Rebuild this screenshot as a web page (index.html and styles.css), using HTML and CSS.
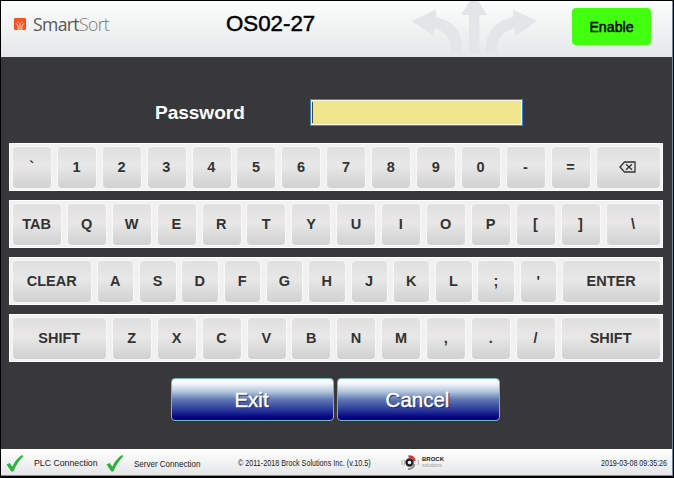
FILE: index.html
```
<!DOCTYPE html>
<html lang="en">
<head>
<meta charset="utf-8">
<title>SmartSort OS02-27</title>
<link rel="stylesheet" href="styles.css">
</head>
<body>
<div class="window">
  <header class="header">
    <svg class="mark" viewBox="0 0 12 12"><rect width="12" height="12" rx="1" fill="#f9511f"/><path d="M6 12V4.500M4.200 12V9Q4.200 6.500 1.800 5.500M7.800 12V9Q7.800 6.500 10.200 5.500" stroke="#ffd5c6" stroke-width="1" fill="none"/><path d="M4 3.500V5M8 3.500V5" stroke="#ffd5c6" stroke-width=".8"/></svg>
    <div class="brand">Smart<span>Sort</span></div>
    <h1 class="title">OS02-27</h1>
    <svg class="arrows" viewBox="0 0 126 56"><g fill="#e3e5e7"><path d="M62 -7L75 14H67.500V53H57V14H49Z"/><path d="M0 20L24 8.500V16Q49 22 50 45V53H39V45Q38 32 22 27V35Z"/><path d="M125 20L101 8.500V16Q75 22 74 45V53H85V45Q86 32 103 27V35Z"/></g></svg>
    <button class="enable">Enable</button>
  </header>
  <main class="main">
    <div class="field"><label for="pw">Password</label><div id="pw" class="input"><i></i></div></div>
    <div class="keyboard">
      <div class="row r1"><b>`</b><b>1</b><b>2</b><b>3</b><b>4</b><b>5</b><b>6</b><b>7</b><b>8</b><b>9</b><b>0</b><b>-</b><b>=</b><b><svg class="back" viewBox="0 0 17 12"><path d="M1 6L5.500 1H16V11H5.500ZM7 3.200L13 8.800M13 3.200L7 8.800" fill="none" stroke="#333" stroke-width="1.300"/></svg></b></div>
      <div class="row r2"><b>TAB</b><b>Q</b><b>W</b><b>E</b><b>R</b><b>T</b><b>Y</b><b>U</b><b>I</b><b>O</b><b>P</b><b>[</b><b>]</b><b>\</b></div>
      <div class="row r3"><b>CLEAR</b><b>A</b><b>S</b><b>D</b><b>F</b><b>G</b><b>H</b><b>J</b><b>K</b><b>L</b><b>;</b><b>'</b><b>ENTER</b></div>
      <div class="row r4"><b>SHIFT</b><b>Z</b><b>X</b><b>C</b><b>V</b><b>B</b><b>N</b><b>M</b><b>,</b><b>.</b><b>/</b><b>SHIFT</b></div>
    </div>
    <div class="actions"><button>Exit</button><button>Cancel</button></div>
  </main>
  <footer class="footer">
    <svg class="check" viewBox="0 0 17 16"><path d="M0.500 9L3.500 7.500L6 11Q9 4 15 0L16.500 1Q10.500 7 7 15.500H5Z" fill="#2fb23c"/></svg>
    <span class="plc">PLC Connection</span>
    <svg class="check second" viewBox="0 0 17 16"><path d="M0.500 9L3.500 7.500L6 11Q9 4 15 0L16.500 1Q10.500 7 7 15.500H5Z" fill="#2fb23c"/></svg>
    <span class="server">Server Connection</span>
    <span class="copy">© 2011-2018 Brock Solutions Inc. (v.10.5)</span>
    <svg class="brock" viewBox="0 0 19 15"><circle cx="8.500" cy="7.500" r="3" fill="none" stroke="#222" stroke-width="2.400"/><path d="M7.500 1.500A6 6 0 0 1 13.500 6" fill="none" stroke="#e52a2c" stroke-width="2.600"/><path d="M13.500 9A6 6 0 0 1 7 14" fill="none" stroke="#888" stroke-width="1.800"/><path d="M1 5V10M3.300 4.500V10.500M17.300 5V10" stroke="#999" stroke-width=".8"/></svg>
    <span class="bname"><strong>BROCK</strong><em>solutions</em></span>
    <time class="time">2019-03-08 09:35:26</time>
  </footer>
</div>
</body>
</html>
```
FILE: styles.css
```
* { box-sizing: border-box; }
body { margin: 0; background: #000; font-family: "Liberation Sans", Arial, sans-serif; }
button { font-family: inherit; padding: 0; }
.window { width: 674px; height: 478px; border: 1px solid #000; border-bottom-width: 2px; display: flex; flex-direction: column; background: #38383a; overflow: hidden; }
.header { height: 56px; display: flex; align-items: flex-start; background: linear-gradient(#fcfdfd, #e5e7e8); border-right: 1px solid #71889b; flex: none; }
.mark { width: 12px; height: 12px; margin: 17px 0 0 13px; flex: none; }
.brand { width: 76px; margin: 9px 0 0 7px; font: 19px/28px "Open Sans", sans-serif; letter-spacing: -.7px; color: #575757; white-space: nowrap; transform: scaleX(.927); transform-origin: left; flex: none; }
.brand span { font-weight: 300; color: #777; }
.title { width: 96px; margin: 10px 0 0 117px; font-size: 22.300px; line-height: 26px; font-weight: 400; color: #000; -webkit-text-stroke: .45px #000; white-space: nowrap; flex: none; }
.arrows { width: 126px; height: 56px; margin-left: 90px; flex: none; }
.enable { width: 79px; height: 37px; margin: 7px 0 0 34px; border: 0; border-radius: 4px; background: #42ff10; font-size: 14.200px; color: #000; -webkit-text-stroke: .45px #000; flex: none; }
.main { flex: 1; border-right: 1px solid #71889b; padding: 41px 8px 0; }
.field { height: 28px; display: flex; align-items: center; padding-left: 146px; }
.field label { width: 155px; padding-top: 1px; font-size: 19px; font-weight: 700; color: #fff; }
.input { width: 213px; height: 27px; border: 1px solid #2c8be0; box-shadow: inset 0 0 0 1px #f8f6dd; background: #eee58c; padding: 2px 1px; }
.input i { display: block; width: 1px; height: 21px; background: #444; }
.keyboard { display: grid; grid-template-rows: repeat(4, 48px); gap: 9px; margin-top: 17px; width: 654px; }
.row { display: grid; column-gap: 6.900px; padding: 3px 2px 2px 3px; background: #f1f1f1; border: 1px solid #fff; }
.r1 { grid-template-columns: repeat(13, 38px) 1fr; }
.r2 { grid-template-columns: 48px repeat(12, 38px) 1fr; }
.r3 { grid-template-columns: 78px repeat(11, 35.400px) 1fr; }
.r4 { grid-template-columns: 93px repeat(10, 38px) 1fr; }
.row b { height: 41px; display: flex; align-items: center; justify-content: center; padding: 0 .6px 1px 0; border-radius: 4px; background: linear-gradient(#e0e0e0 0%, #e9e7e7 45%, #d1d1d1 100%); box-shadow: 0 0 0 1px #f8f8f8; color: #333; font-size: 14.500px; line-height: 20px; }
.back { width: 17px; height: 12px; }
.actions { display: flex; gap: 3px; margin: 16px 0 0 162px; }
.actions button { width: 163px; height: 43px; padding-right: 2px; border: 1px solid #79b5bd; border-radius: 4px; background: linear-gradient(#fff 0%, #f6f9fb 10%, #b6c8df 30%, #5f79b5 50%, #3546a0 70%, #000080 95%); color: #fff; font-size: 20.500px; text-shadow: 1px 1px 1px #18114f; -webkit-text-stroke: .45px #fff; }
.footer { height: 27px; flex: none; display: flex; align-items: center; background: linear-gradient(#fff, #e4e6e8); border-bottom: 1px solid #8290a0; border-right: 1px solid #71889b; font-size: 9px; color: #222; white-space: nowrap; }
.footer > * { flex: none; }
.footer > span, .time { transform-origin: left; }
.check { width: 18px; height: 17px; margin: 2px 0 0 5px; }
.plc { width: 63px; margin: 2px 0 0 10px; transform: scaleX(.97); }
.second { margin-left: 9px; }
.server { width: 66px; margin: 4px 0 0 10px; transform: scaleX(.89); }
.copy { width: 133px; margin: 2px 0 0 38px; transform: scaleX(.8); }
.brock { width: 19px; height: 15px; margin: 0 0 0 30px; }
.bname { width: 23px; margin: 0 0 0 2px; display: flex; flex-direction: column; font-size: 6px; line-height: 6px; }
.bname em { font-style: normal; color: #999; font-size: 5px; }
.time { width: 66px; margin: 2px 5px 0 auto; transform: scaleX(.79); }
```
